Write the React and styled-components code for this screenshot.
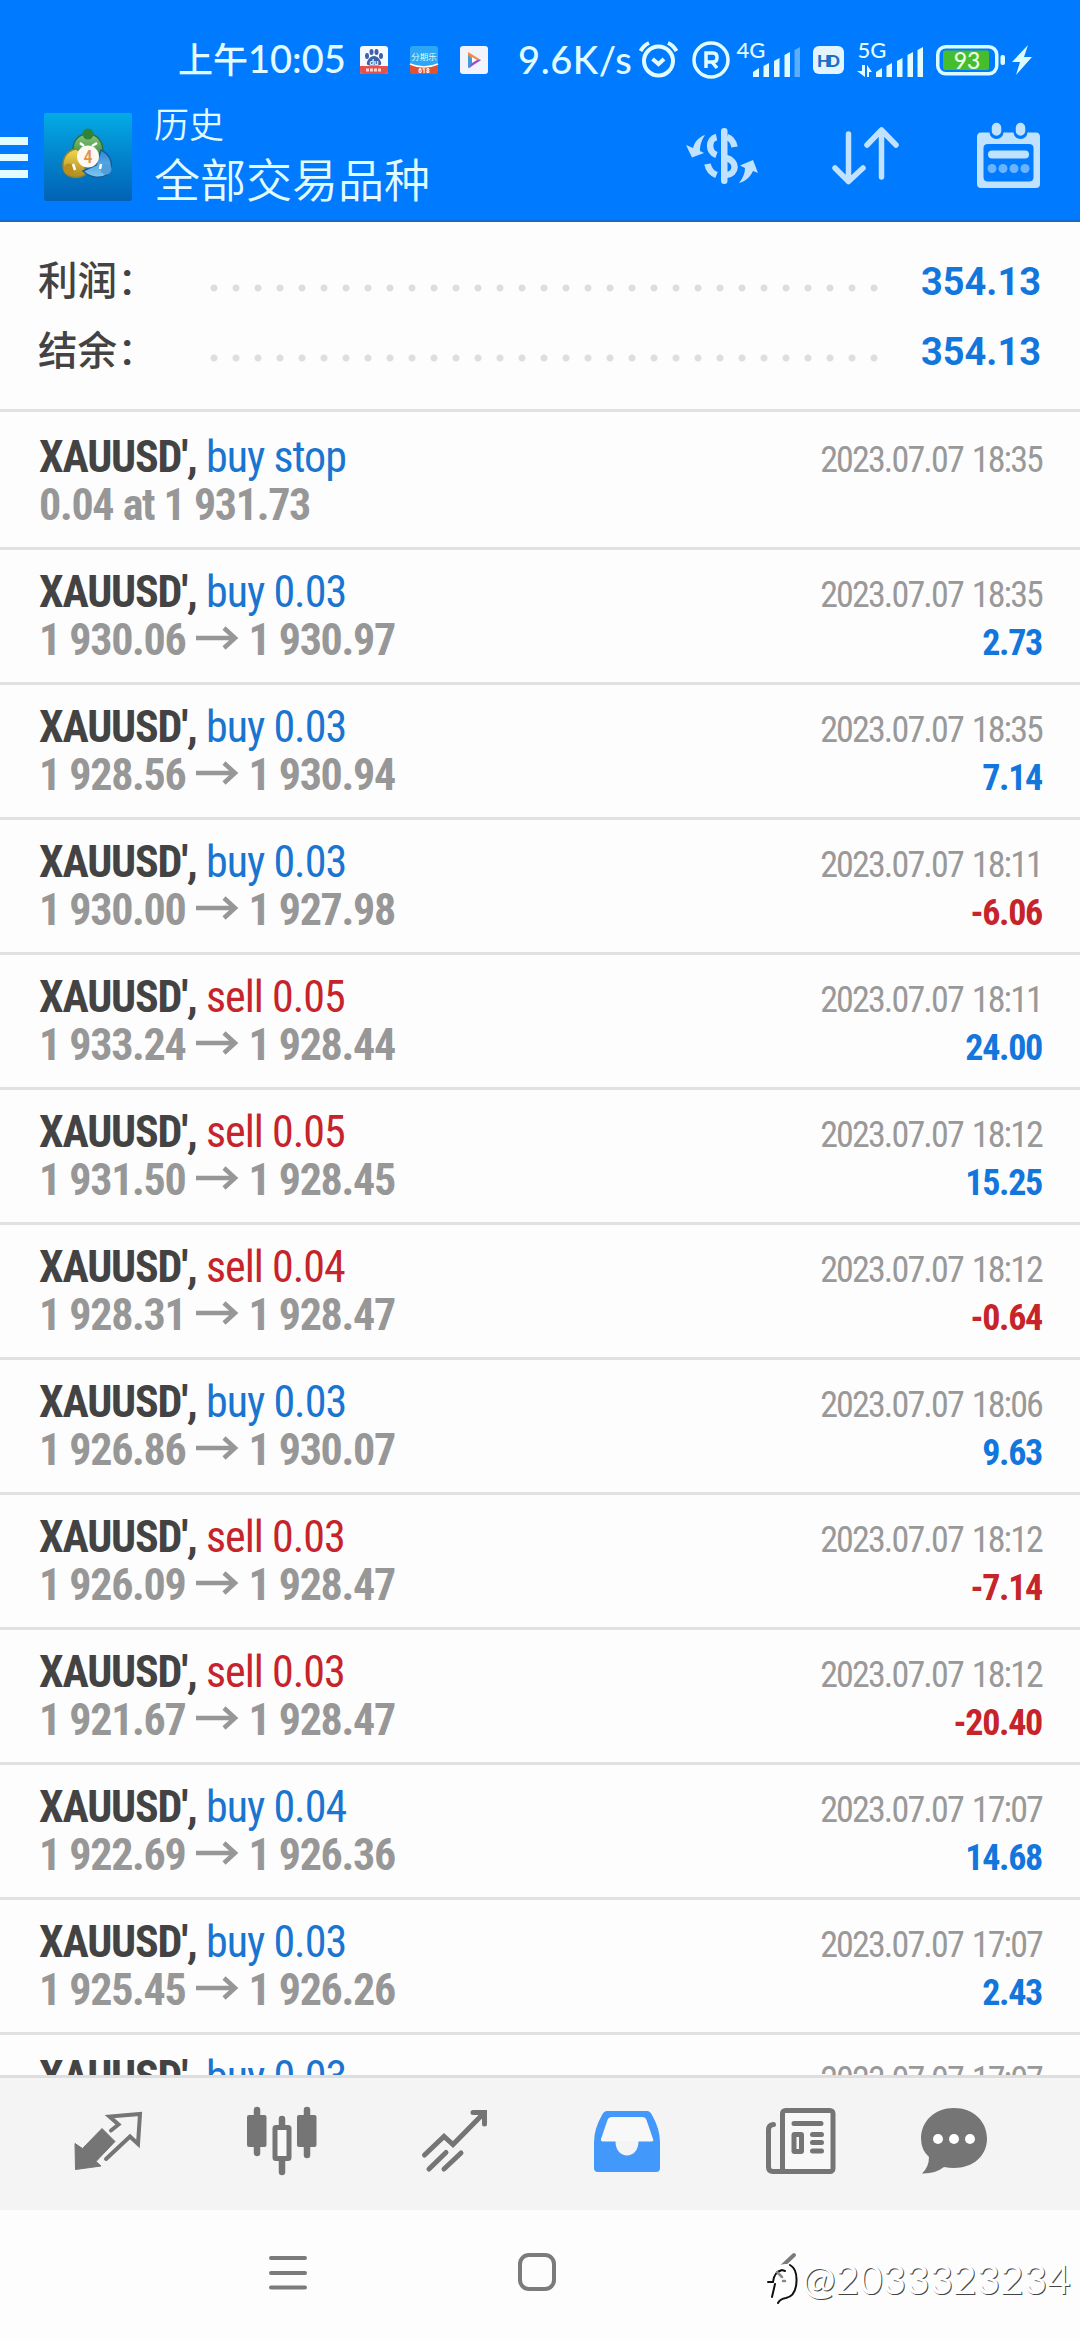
import React from "react";
import styled, { createGlobalStyle } from "styled-components";

const GlobalStyle = createGlobalStyle`
  * {
    box-sizing: border-box;
  }

  body {
    margin: 0;
    background: #fdfdfd;
  }

  svg {
    display: block;
    flex: none;
    overflow: visible;
  }
`;

const Page = styled.div`
  position: relative;
  display: flex;
  flex-direction: column;
  width: 1080px;
  height: 2340px;
  overflow: hidden;
  background: #fdfdfd;
  font-family: "Roboto Condensed", Roboto, "Noto Sans CJK SC", sans-serif;
  font-stretch: 75%;
`;

const Header = styled.header`
  height: 222px;
  flex: none;
  background: #007aff;
  border-bottom: 2px solid #1a68c8;
  color: #e2fbff;
`;

const StatusBar = styled.div`
  display: flex;
  align-items: center;
  height: 108px;
  padding: 11px 0 0 178px;
`;

const StatusText = styled.span`
  width: ${(p) => p.$width}px;
  margin-top: -2px;
  margin-right: ${(p) => p.$after}px;
  font-family: Lato, "Noto Sans CJK SC", sans-serif;
  font-size: 38px;
  line-height: 48px;
  font-weight: 500;
  letter-spacing: ${(p) => p.$spacing || 0}px;
  white-space: nowrap;

  small {
    font-size: 35px;
  }
`;

const StatusIcon = styled.div`
  margin-right: ${(p) => p.$after}px;
`;

const TitleBar = styled.div`
  display: flex;
  height: 112px;
`;

const MenuButton = styled.div`
  display: flex;
  flex-direction: column;
  gap: 9px;
  width: 28px;
  margin: 29px 16px 0 0;

  i {
    height: 7.5px;
    background: #e2fbff;
  }
`;

const AppLogo = styled.div`
  width: 88px;
  margin: 5px 22px 0 0;
`;

const Titles = styled.div`
  width: 532px;
  font-family: "Noto Sans CJK SC", sans-serif;
  font-weight: 350;
`;

const Subtitle = styled.div`
  margin-top: -7px;
  font-size: 35px;
  line-height: 44px;
`;

const Title = styled.div`
  margin-top: 3px;
  font-size: 46px;
  line-height: 58px;
`;

const Actions = styled.div`
  display: flex;
  align-items: center;
  height: 94px;
  color: #c0e2ff;
`;

const Action = styled.div`
  margin-right: ${(p) => p.$after}px;
`;

const Summary = styled.section`
  height: 190px;
  flex: none;
  padding: 23px 39px 0 38px;
  border-bottom: 3px solid #e1e1e1;
`;

const SummaryRow = styled.div`
  display: flex;
  align-items: center;
  height: 70px;
`;

const SummaryLabel = styled.div`
  width: 165px;
  margin-top: -4px;
  color: #434343;
  font-family: "Noto Sans CJK SC", sans-serif;
  font-size: 39.5px;
  font-weight: 500;
  line-height: 70px;

  span {
    margin-left: 4px;
    font-family: Roboto, sans-serif;
    font-stretch: 100%;
    font-size: 47px;
    line-height: 0;
  }
`;

const Dots = styled.div`
  width: 682px;
  height: 8px;
  margin-top: 16px;
  background: radial-gradient(circle, #dedede 3px, transparent 4px) 0 0 / 22px 8px;
`;

const SummaryValue = styled.div`
  flex: 1;
  padding-top: 3px;
  color: #1276dc;
  font-family: Roboto, sans-serif;
  font-stretch: 100%;
  font-size: 38px;
  font-weight: 700;
  text-align: right;
`;

const List = styled.main`
  flex: 1;
  min-height: 0;
  overflow: hidden;
`;

const Row = styled.div`
  display: flex;
  justify-content: space-between;
  height: 135px;
  padding: 18px 38px 0 39px;
  border-bottom: 3px solid #e1e1e1;
  white-space: nowrap;

  &:first-child {
    height: 138px;
    padding-top: 21px;
  }
`;

const Line = styled.div`
  display: flex;
  height: 48px;
  line-height: 48px;
  font-size: 44px;
  letter-spacing: -1px;
`;

const Symbol = styled.span`
  width: 167px;
  color: #434343;
  font-weight: 700;
  letter-spacing: -1.2px;
`;

const Side = styled.span`
  color: ${(p) => (p.$sell ? "#c6232a" : "#1a75d0")};
`;

const Prices = styled(Line)`
  color: #979797;
  font-weight: 700;
  letter-spacing: -1.3px;
  word-spacing: 0.5px;
  gap: 10.5px;

  svg {
    margin-top: 11px;
  }
`;

const Meta = styled.div`
  padding-top: 3px;
  text-align: right;
  font-size: 36px;
  line-height: 48px;
`;

const Time = styled.div`
  color: #999;
  letter-spacing: -1.85px;
  word-spacing: 2.5px;
`;

const Profit = styled.div`
  color: ${(p) => (p.$loss ? "#c6232a" : "#1276dc")};
  font-weight: 700;
  letter-spacing: -1.3px;
`;

const TabBar = styled.nav`
  display: grid;
  grid-template-columns: repeat(5, 173px) 133px;
  justify-items: center;
  align-items: center;
  height: 135px;
  flex: none;
  padding: 0 0 6px 22px;
  border-top: 3px solid #dedede;
  background: #f4f4f4;
`;

const Tab = styled.div`
  color: ${(p) => (p.$active ? "#4398fb" : "#757575")};
`;

const SystemNav = styled.div`
  display: flex;
  height: 130px;
  flex: none;
  padding: 43px 0 0 269px;
  gap: 211px;
  color: #7b7b7b;
`;

const Watermark = styled.div`
  position: absolute;
  left: 765px;
  top: 2260px;
  display: flex;
  color: #fff;
  font-family: Lato, sans-serif;
  font-size: 40px;
  font-weight: 400;
  line-height: 39px;
  letter-spacing: 0.3px;
  text-shadow: 1px 1px 0 #444;
`;

const SignalBox = styled.div`
  position: relative;
  display: flex;
  align-items: flex-end;
  justify-content: space-between;
  width: ${(p) => p.$width}px;
  height: 35px;
  margin-right: ${(p) => p.$after}px;
`;

const NetworkType = styled.b`
  position: absolute;
  left: 0;
  top: -3px;
  font: 500 22px/22px Lato, sans-serif;
`;

const Bars = ({ weak }) => (
  <svg width="48" height="30" fill="currentColor">
    <path d="M0 30V25L6 21V30Z" />
    <path d="M10.5 30V19L16 16V30Z" />
    <path d="M21 30V14L26.5 11V30Z" />
    <path d="M31.5 30V8L37 5V30Z" />
    <path d="M41.5 30V3L47 0V30Z" opacity={weak ? 0.4 : 1} />
  </svg>
);

const DataArrows = () => (
  <svg width="15" height="12" fill="currentColor">
    <path d="M4 0H7V12L-1 6H4Z" />
    <path d="M9 12V0L14 7H11V12Z" />
  </svg>
);

const BaiduIcon = () => (
  <svg width="28" height="28">
    <rect width="28" height="28" rx="3" fill="#f4fbff" />
    <path d="M0 20H28V25Q28 28 25 28H3Q0 28 0 25Z" fill="#e8504c" />
    <g fill="#3f5fa8">
      <ellipse cx="7" cy="10" rx="2" ry="3" />
      <ellipse cx="11.5" cy="6" rx="2" ry="3" />
      <ellipse cx="16.5" cy="6" rx="2" ry="3" />
      <ellipse cx="21" cy="10" rx="2" ry="3" />
      <path d="M14 10C18 10 20 14 21 16Q22 19.500 18 19.500H10Q6 19.500 7 16C8 14 10 10 14 10Z" />
    </g>
    <text x="14" y="18.500" textAnchor="middle" fontFamily="Lato" fontWeight="700" fontSize="8" fill="#fff">
      du
    </text>
    <path d="M6 24H22" stroke="#ffd5cf" strokeWidth="3" strokeDasharray="3 1" />
  </svg>
);

const InstallmentIcon = () => (
  <svg width="28" height="28">
    <rect width="28" height="28" rx="3" fill="#2fa6f5" />
    <path d="M0 18Q14 23 28 18V25Q28 28 25 28H3Q0 28 0 25Z" fill="#e0532e" />
    <path d="M0 18Q14 24 28 18" stroke="#fff" strokeWidth="1.500" fill="none" />
    <text x="14" y="14" textAnchor="middle" fontFamily="Noto Sans CJK SC" fontSize="8.500" fill="#d8fbff">
      分期乐
    </text>
    <text x="14" y="27" textAnchor="middle" fontFamily="Roboto" fontWeight="700" fontSize="7.500" fill="#fff">
      618
    </text>
  </svg>
);

const VideoIcon = () => (
  <svg width="28" height="28">
    <rect width="28" height="28" rx="3" fill="#f3f3fb" />
    <path d="M8 6L21 14L16 17L8 11Z" fill="#f18a45" />
    <path d="M8 9L13 14L11 21L8 22Z" fill="#3f9be0" />
    <path d="M21 14L9 22L13 14Z" fill="#9a4fd0" />
    <path d="M12 11V17L17 14Z" fill="#fff" />
  </svg>
);

const AlarmIcon = () => (
  <svg width="39" height="37" fill="none" stroke="currentColor" strokeWidth="4">
    <circle cx="19.500" cy="20" r="14.500" />
    <path d="M1.500 10Q5 4 10 2M37.500 10Q34 4 29 2" />
    <path d="M13.500 18L19.500 23L25 18" />
  </svg>
);

const RegisteredIcon = () => (
  <svg width="38" height="38" fill="none" stroke="currentColor" strokeWidth="3.500">
    <circle cx="19" cy="19" r="17" />
    <path d="M14 27V12H21Q25 12 25 16.500Q25 21 21 21H14M20 21L25 27" />
  </svg>
);

const HdIcon = () => (
  <svg width="31" height="28">
    <rect width="31" height="28" rx="6" fill="#e2f5ff" />
    <text x="15.500" y="20.500" textAnchor="middle" fontFamily="Lato" fontWeight="900" fontSize="17" textLength="23" fill="#1d6fc4">
      HD
    </text>
  </svg>
);

const BatteryIcon = () => (
  <svg width="98" height="30">
    <rect x="1.750" y="1.750" width="59" height="27" rx="8" fill="none" stroke="#dcfbff" strokeWidth="3.500" />
    <rect x="7" y="5.500" width="46" height="19.500" rx="2" fill="#46bd2c" />
    <text x="31" y="23.500" textAnchor="middle" fontFamily="Lato" fontWeight="500" fontSize="23" fill="#e8ffe8">
      93
    </text>
    <rect x="64.500" y="10" width="4.500" height="10" rx="2" fill="#dcfbff" />
    <path d="M92 0L76 17H84L80 30L96 12H88Z" fill="#dcfbff" />
  </svg>
);

const MetaTraderLogo = () => (
  <svg width="88" height="88">
    <defs>
      <linearGradient id="sea" x1="0" y1="0" x2="0" y2="1">
        <stop offset="0" stopColor="#04abe6" />
        <stop offset="0.500" stopColor="#0284cc" />
        <stop offset="1" stopColor="#0262b4" />
      </linearGradient>
      <linearGradient id="leaf" x1="0" y1="0" x2="0" y2="1">
        <stop offset="0" stopColor="#8cc47c" />
        <stop offset="1" stopColor="#2c8a32" />
      </linearGradient>
      <linearGradient id="gold" x1="0" y1="0" x2="0" y2="1">
        <stop offset="0" stopColor="#f0d850" />
        <stop offset="1" stopColor="#b08a1e" />
      </linearGradient>
      <linearGradient id="sky" x1="0" y1="0" x2="0" y2="1">
        <stop offset="0" stopColor="#2c86d2" />
        <stop offset="1" stopColor="#7cc8f4" />
      </linearGradient>
    </defs>
    <rect width="88" height="88" rx="2" fill="url(#sea)" />
    <path d="M29 40C28 27 35 21 44 21S60 28 59 42L52 46L36 42Z" fill="url(#leaf)" stroke="#2d6f46" strokeWidth="1.500" />
    <path d="M32 36C20 38 17 50 20 58C24 66 36 66 42 61L38 40Z" fill="url(#gold)" stroke="#8c8433" strokeWidth="1.500" />
    <path d="M57 37C68 42 70 54 64 61C56 67 45 64 39 58L52 52Z" fill="url(#sky)" stroke="#1c5c98" strokeWidth="1.500" />
    <circle cx="44" cy="21" r="5.500" fill="#2f8436" />
    <circle cx="25" cy="56" r="5.500" fill="#b98f20" />
    <circle cx="62" cy="56" r="5.500" fill="#4f9fdd" />
    <path d="M36 30L40 33M53 30L48 33M29 51L31 57M57 51L56 56" stroke="#fff" strokeWidth="2.500" />
    <circle cx="44" cy="43.500" r="11" fill="#fdf8f2" />
    <text x="44" y="50" textAnchor="middle" fontFamily="Roboto" fontWeight="500" fontSize="18" fill="#e2914c">
      4
    </text>
  </svg>
);

const CurrencyIcon = () => (
  <svg width="72" height="55" fill="currentColor">
    <rect x="35" width="6.500" height="56" rx="3" />
    <g fill="none" stroke="currentColor" strokeWidth="6.500">
      <path d="M30.500 9C22 11 22 24 30.500 27" />
      <path d="M41 9Q47 11 48.500 19" />
      <path d="M40 30C52 33 51 46 40 47" />
      <path d="M21.500 36Q23 44 30.500 47" />
    </g>
    <path d="M0 17L7 20C9 13 13 9 19 7C15 13 14 18 14 23L18 25L6 29.500Z" />
    <path d="M67 32L72 45L67 43C64 49 60 53 53 55C57 50 59 45 59 40L54 37.500Z" />
  </svg>
);

const SortIcon = () => (
  <svg width="67" height="57" fill="none" stroke="currentColor" strokeWidth="5.500" strokeLinecap="round" strokeLinejoin="round">
    <path d="M16.500 7V54M3 41L16.500 54.500L31 41" />
    <path d="M49.500 50V3M35 18L49.500 3L64 18" />
  </svg>
);

const CalendarIcon = () => (
  <svg width="63" height="65">
    <path
      d="M4 9.500H59Q63 9.500 63 14V61Q63 65 59 65H4Q0 65 0 61V14Q0 9.500 4 9.500ZM11 21Q6.500 21 6.500 25V54Q6.500 58.500 11 58.500H52Q56.500 58.500 56.500 54V25Q56.500 21 52 21Z"
      fill="currentColor"
      fillRule="evenodd"
    />
    <path d="M19.500 4V9M43.500 4V9" stroke="#007aff" strokeWidth="14" strokeLinecap="round" />
    <path d="M19.500 4.500V8M43.500 4.500V8" stroke="currentColor" strokeWidth="9.500" strokeLinecap="round" />
    <path d="M15 31.500H48" stroke="currentColor" strokeWidth="8" strokeLinecap="round" />
    <g fill="#6ab4ff">
      <circle cx="15" cy="45.500" r="4.500" />
      <circle cx="26" cy="45.500" r="4.500" />
      <circle cx="37" cy="45.500" r="4.500" />
      <circle cx="48" cy="45.500" r="4.500" />
    </g>
  </svg>
);

const PriceArrow = () => (
  <svg width="42" height="22" fill="none" stroke="currentColor" strokeWidth="4.500">
    <path d="M0 11H39M28 1L39 11L28 21" />
  </svg>
);

const QuotesIcon = () => (
  <svg width="67" height="58">
    <path d="M0 31.500L7.500 36.500L27 16.500L40 29.500L21 49.500L26 54L0.500 57.500Z" fill="currentColor" stroke="currentColor" strokeLinejoin="round" />
    <path d="M36 18.500L43.500 12.500L34.500 4.500L65 2L63 32L55 24.500L31 47" fill="none" stroke="currentColor" strokeWidth="4" strokeLinecap="round" />
  </svg>
);

const ChartIcon = () => (
  <svg width="70" height="68" fill="currentColor">
    <rect y="8" width="19.500" height="32" rx="2" />
    <rect x="50" y="8" width="19.500" height="32" rx="2" />
    <path d="M10 3V46M60 3V48M35 12V20M35 54V65" stroke="currentColor" strokeWidth="6.500" strokeLinecap="round" />
    <rect x="28" y="20.500" width="14" height="31" rx="1" fill="#f8f8f8" stroke="currentColor" strokeWidth="5" />
  </svg>
);

const TradeIcon = () => (
  <svg width="66" height="62" fill="none" stroke="currentColor" strokeWidth="5" strokeLinecap="round">
    <path d="M2.500 45L22 26.500L31 34.500L62 3" />
    <path d="M51 2.500H62.500V14" />
    <path d="M7 59L24 42.500M22 59L39 43" />
  </svg>
);

const HistoryIcon = () => (
  <svg width="67" height="61">
    <path d="M14 3H52L62 30H5Z" fill="#f8f8f8" />
    <path
      d="M13 0H53Q56 0 58 4Q66 18 66 31V57Q66 61 62 61H4Q0 61 0 57V31Q0 18 8 4Q10 0 13 0ZM18 6Q14.500 6 13.500 9L7 28Q6.500 30.500 9 30.500H21.500C21.500 49 44.500 49 44.500 30.500H57.500Q60 30.500 59 28L52.500 9Q51.500 6 48 6Z"
      fill="currentColor"
      fillRule="evenodd"
    />
  </svg>
);

const NewsIcon = () => (
  <svg width="70" height="66" fill="none" stroke="currentColor" strokeWidth="5" strokeLinecap="round">
    <path d="M7.500 16.500Q2.500 17 2.500 22V59Q2.500 63.500 7 63.500H17" />
    <rect x="16.500" y="2.500" width="50.500" height="61" rx="3" fill="#f8f8f8" />
    <path d="M28 15.500H55M46.500 26.500H55.500M46.500 34.500H55.500M46.500 43H55.500" />
    <rect x="28" y="26.500" width="7.500" height="17" rx="0.500" />
  </svg>
);

const MessagesIcon = () => (
  <svg width="66" height="66" fill="currentColor">
    <path d="M33 0C52 0 66 13 66 30.500S52 60 33 60Q28 60 23 59Q14 66 1 65.500Q8 59 8 49Q0 42 0 30.500C0 13 14 0 33 0Z" />
    <g fill="#fff">
      <circle cx="17" cy="31" r="5" />
      <circle cx="33" cy="31" r="5" />
      <circle cx="49" cy="31" r="5" />
    </g>
  </svg>
);

const orders = [
  { type: "buy stop", from: "0.04 at 1 931.73", time: "18:35" },
  { type: "buy 0.03", from: "1 930.06", to: "1 930.97", time: "18:35", profit: "2.73" },
  { type: "buy 0.03", from: "1 928.56", to: "1 930.94", time: "18:35", profit: "7.14" },
  { type: "buy 0.03", from: "1 930.00", to: "1 927.98", time: "18:11", profit: "-6.06" },
  { type: "sell 0.05", from: "1 933.24", to: "1 928.44", time: "18:11", profit: "24.00" },
  { type: "sell 0.05", from: "1 931.50", to: "1 928.45", time: "18:12", profit: "15.25" },
  { type: "sell 0.04", from: "1 928.31", to: "1 928.47", time: "18:12", profit: "-0.64" },
  { type: "buy 0.03", from: "1 926.86", to: "1 930.07", time: "18:06", profit: "9.63" },
  { type: "sell 0.03", from: "1 926.09", to: "1 928.47", time: "18:12", profit: "-7.14" },
  { type: "sell 0.03", from: "1 921.67", to: "1 928.47", time: "18:12", profit: "-20.40" },
  { type: "buy 0.04", from: "1 922.69", to: "1 926.36", time: "17:07", profit: "14.68" },
  { type: "buy 0.03", from: "1 925.45", to: "1 926.26", time: "17:07", profit: "2.43" },
  { type: "buy 0.03", time: "17:07" },
];

const Order = ({ type, from, to, time, profit }) => (
  <Row>
    <div>
      <Line>
        <Symbol>XAUUSD',</Symbol>
        <Side $sell={type.startsWith("sell")}>{type}</Side>
      </Line>
      {from && (
        <Prices>
          <span>{from}</span>
          {to && <PriceArrow />}
          {to && <span>{to}</span>}
        </Prices>
      )}
    </div>
    <Meta>
      <Time>2023.07.07 {time}</Time>
      {profit && <Profit $loss={profit.startsWith("-")}>{profit}</Profit>}
    </Meta>
  </Row>
);

const App = () => {
  return (
    <>
      <GlobalStyle />
      <Page>
        <Header>
          <StatusBar>
            <StatusText $width={170} $after={12}>
              <small>上午</small>10:05
            </StatusText>
            <StatusIcon $after={22}>
              <BaiduIcon />
            </StatusIcon>
            <StatusIcon $after={22}>
              <InstallmentIcon />
            </StatusIcon>
            <StatusIcon $after={30}>
              <VideoIcon />
            </StatusIcon>
            <StatusText $width={112} $after={8.5} $spacing={0.6}>
              9.6K/s
            </StatusText>
            <StatusIcon $after={14}>
              <AlarmIcon />
            </StatusIcon>
            <StatusIcon $after={7}>
              <RegisteredIcon />
            </StatusIcon>
            <SignalBox $width={64} $after={12}>
              <NetworkType>4G</NetworkType>
              <span />
              <Bars weak />
            </SignalBox>
            <StatusIcon $after={14}>
              <HdIcon />
            </StatusIcon>
            <SignalBox $width={66} $after={12}>
              <NetworkType>5G</NetworkType>
              <DataArrows />
              <Bars />
            </SignalBox>
            <BatteryIcon />
          </StatusBar>
          <TitleBar>
            <MenuButton>
              <i />
              <i />
              <i />
            </MenuButton>
            <AppLogo>
              <MetaTraderLogo />
            </AppLogo>
            <Titles>
              <Subtitle>历史</Subtitle>
              <Title>全部交易品种</Title>
            </Titles>
            <Actions>
              <Action $after={74}>
                <CurrencyIcon />
              </Action>
              <Action $after={78}>
                <SortIcon />
              </Action>
              <Action $after={40}>
                <CalendarIcon />
              </Action>
            </Actions>
          </TitleBar>
        </Header>
        <Summary>
          <SummaryRow>
            <SummaryLabel>
              利润<span>:</span>
            </SummaryLabel>
            <Dots />
            <SummaryValue>354.13</SummaryValue>
          </SummaryRow>
          <SummaryRow>
            <SummaryLabel>
              结余<span>:</span>
            </SummaryLabel>
            <Dots />
            <SummaryValue>354.13</SummaryValue>
          </SummaryRow>
        </Summary>
        <List>
          {orders.map((order, i) => (
            <Order key={i} {...order} />
          ))}
        </List>
        <TabBar>
          <Tab>
            <QuotesIcon />
          </Tab>
          <Tab>
            <ChartIcon />
          </Tab>
          <Tab>
            <TradeIcon />
          </Tab>
          <Tab $active>
            <HistoryIcon />
          </Tab>
          <Tab>
            <NewsIcon />
          </Tab>
          <Tab>
            <MessagesIcon />
          </Tab>
        </TabBar>
        <SystemNav>
          <svg width="38" height="38" stroke="currentColor" strokeWidth="4" strokeLinecap="round">
            <path d="M2 5H36M2 20H36M2 34.500H36" />
          </svg>
          <svg width="38" height="38" fill="none" stroke="currentColor" strokeWidth="4">
            <rect x="2" y="2" width="34" height="34" rx="9" />
          </svg>
          <svg width="20" height="38" fill="none" stroke="currentColor" strokeWidth="4" strokeLinecap="round">
            <path d="M27 2L10 18" />
          </svg>
        </SystemNav>
        <Watermark>
          <svg width="37" height="46" fill="none" strokeLinecap="round">
            <path d="M2 38L5 15Q10 3 22 4Q33 8 32 22Q32 38 12 44Z" fill="#fff" />
            <path d="M25 5Q32 9 31.500 21Q31 36 21 38Q15 39 13 43" stroke="#111" strokeWidth="2" />
            <path d="M7 37L10 24M3 22H8Q9 12 17 10L20 11" stroke="#111" strokeWidth="2" />
            <path d="M12 12L17 17M18 21H20" stroke="#888" strokeWidth="2.500" />
          </svg>
          @2033323234
        </Watermark>
      </Page>
    </>
  );
};

export default App;
